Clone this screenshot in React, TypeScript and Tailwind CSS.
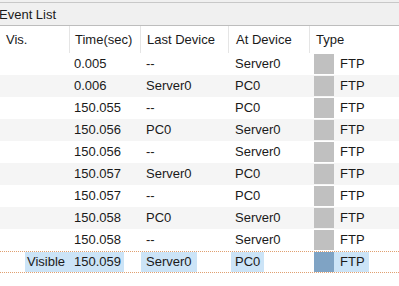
import React from 'react';

type Row = { time: string; last: string; at: string; selected?: boolean };

const rows: Row[] = [
  { time: '0.005', last: '--', at: 'Server0' },
  { time: '0.006', last: 'Server0', at: 'PC0' },
  { time: '150.055', last: '--', at: 'PC0' },
  { time: '150.056', last: 'PC0', at: 'Server0' },
  { time: '150.056', last: '--', at: 'Server0' },
  { time: '150.057', last: 'Server0', at: 'PC0' },
  { time: '150.057', last: '--', at: 'PC0' },
  { time: '150.058', last: 'PC0', at: 'Server0' },
  { time: '150.058', last: '--', at: 'Server0' },
  { time: '150.059', last: 'Server0', at: 'PC0', selected: true },
];

const cols = 'grid grid-cols-[69px_71px_88px_81px_1fr]';

export default function App() {
  return (
    <div className="w-[399px] h-[286px] bg-white overflow-hidden text-[13px] text-[#1a1a1a] font-['Liberation_Sans',Arial,sans-serif]">
      {/* top frame */}
      <div className="h-[3px] bg-[#f0f0f0] border-b border-[#c8c8c8]" />
      {/* title */}
      <div className="h-[23px] bg-[#f0f0f0] border-b border-[#bdbdbd] flex items-center leading-none">
        <span className="-ml-px">Event List</span>
      </div>
      {/* header */}
      <div className={`${cols} h-[27px] bg-white items-center`}>
        <div className="pl-[6px]">Vis.</div>
        <div className="pl-[5px] border-l border-[#e5e5e5] h-full flex items-center">Time(sec)</div>
        <div className="pl-[6px] border-l border-[#e5e5e5] h-full flex items-center">Last Device</div>
        <div className="pl-[7px] border-l border-[#e5e5e5] h-full flex items-center">At Device</div>
        <div className="pl-[6px] border-l border-[#e5e5e5] h-full flex items-center">Type</div>
      </div>
      {/* rows */}
      <div>
        {rows.map((r, i) => {
          const alt = i % 2 === 1 && !r.selected;
          const hl = r.selected ? 'bg-[#cce4f7]' : '';
          return (
            <div
              key={i}
              className={`${cols} h-[22px] items-center ${alt ? 'bg-[#f5f5f5]' : 'bg-white'} ${
                r.selected ? 'border-y border-dotted border-[#e0a070]' : ''
              }`}
            >
              <div className="h-full flex items-center justify-end">
                {r.selected && <span className={`${hl} h-full flex items-center px-[2px] w-[44px]`}>Visible</span>}
              </div>
              <div className="h-full flex items-center">
                <span className={`${hl} h-full flex items-center pl-[5px] pr-[3px]`}>{r.time}</span>
              </div>
              <div className="h-full flex items-center pl-px">
                <span className={`${hl} h-full flex items-center px-[5px]`}>{r.last}</span>
              </div>
              <div className="h-full flex items-center pl-[3px]">
                <span className={`${hl} h-full flex items-center px-[4px]`}>{r.at}</span>
              </div>
              <div className="h-full flex items-center pl-[5px]">
                <div className={`w-[20px] h-[20px] ${r.selected ? 'bg-[#7fa3c4]' : 'bg-[#c0c0c0]'}`} />
                <span className={`${hl} h-full flex items-center pl-[6px] pr-[4px]`}>FTP</span>
              </div>
            </div>
          );
        })}
      </div>
    </div>
  );
}
